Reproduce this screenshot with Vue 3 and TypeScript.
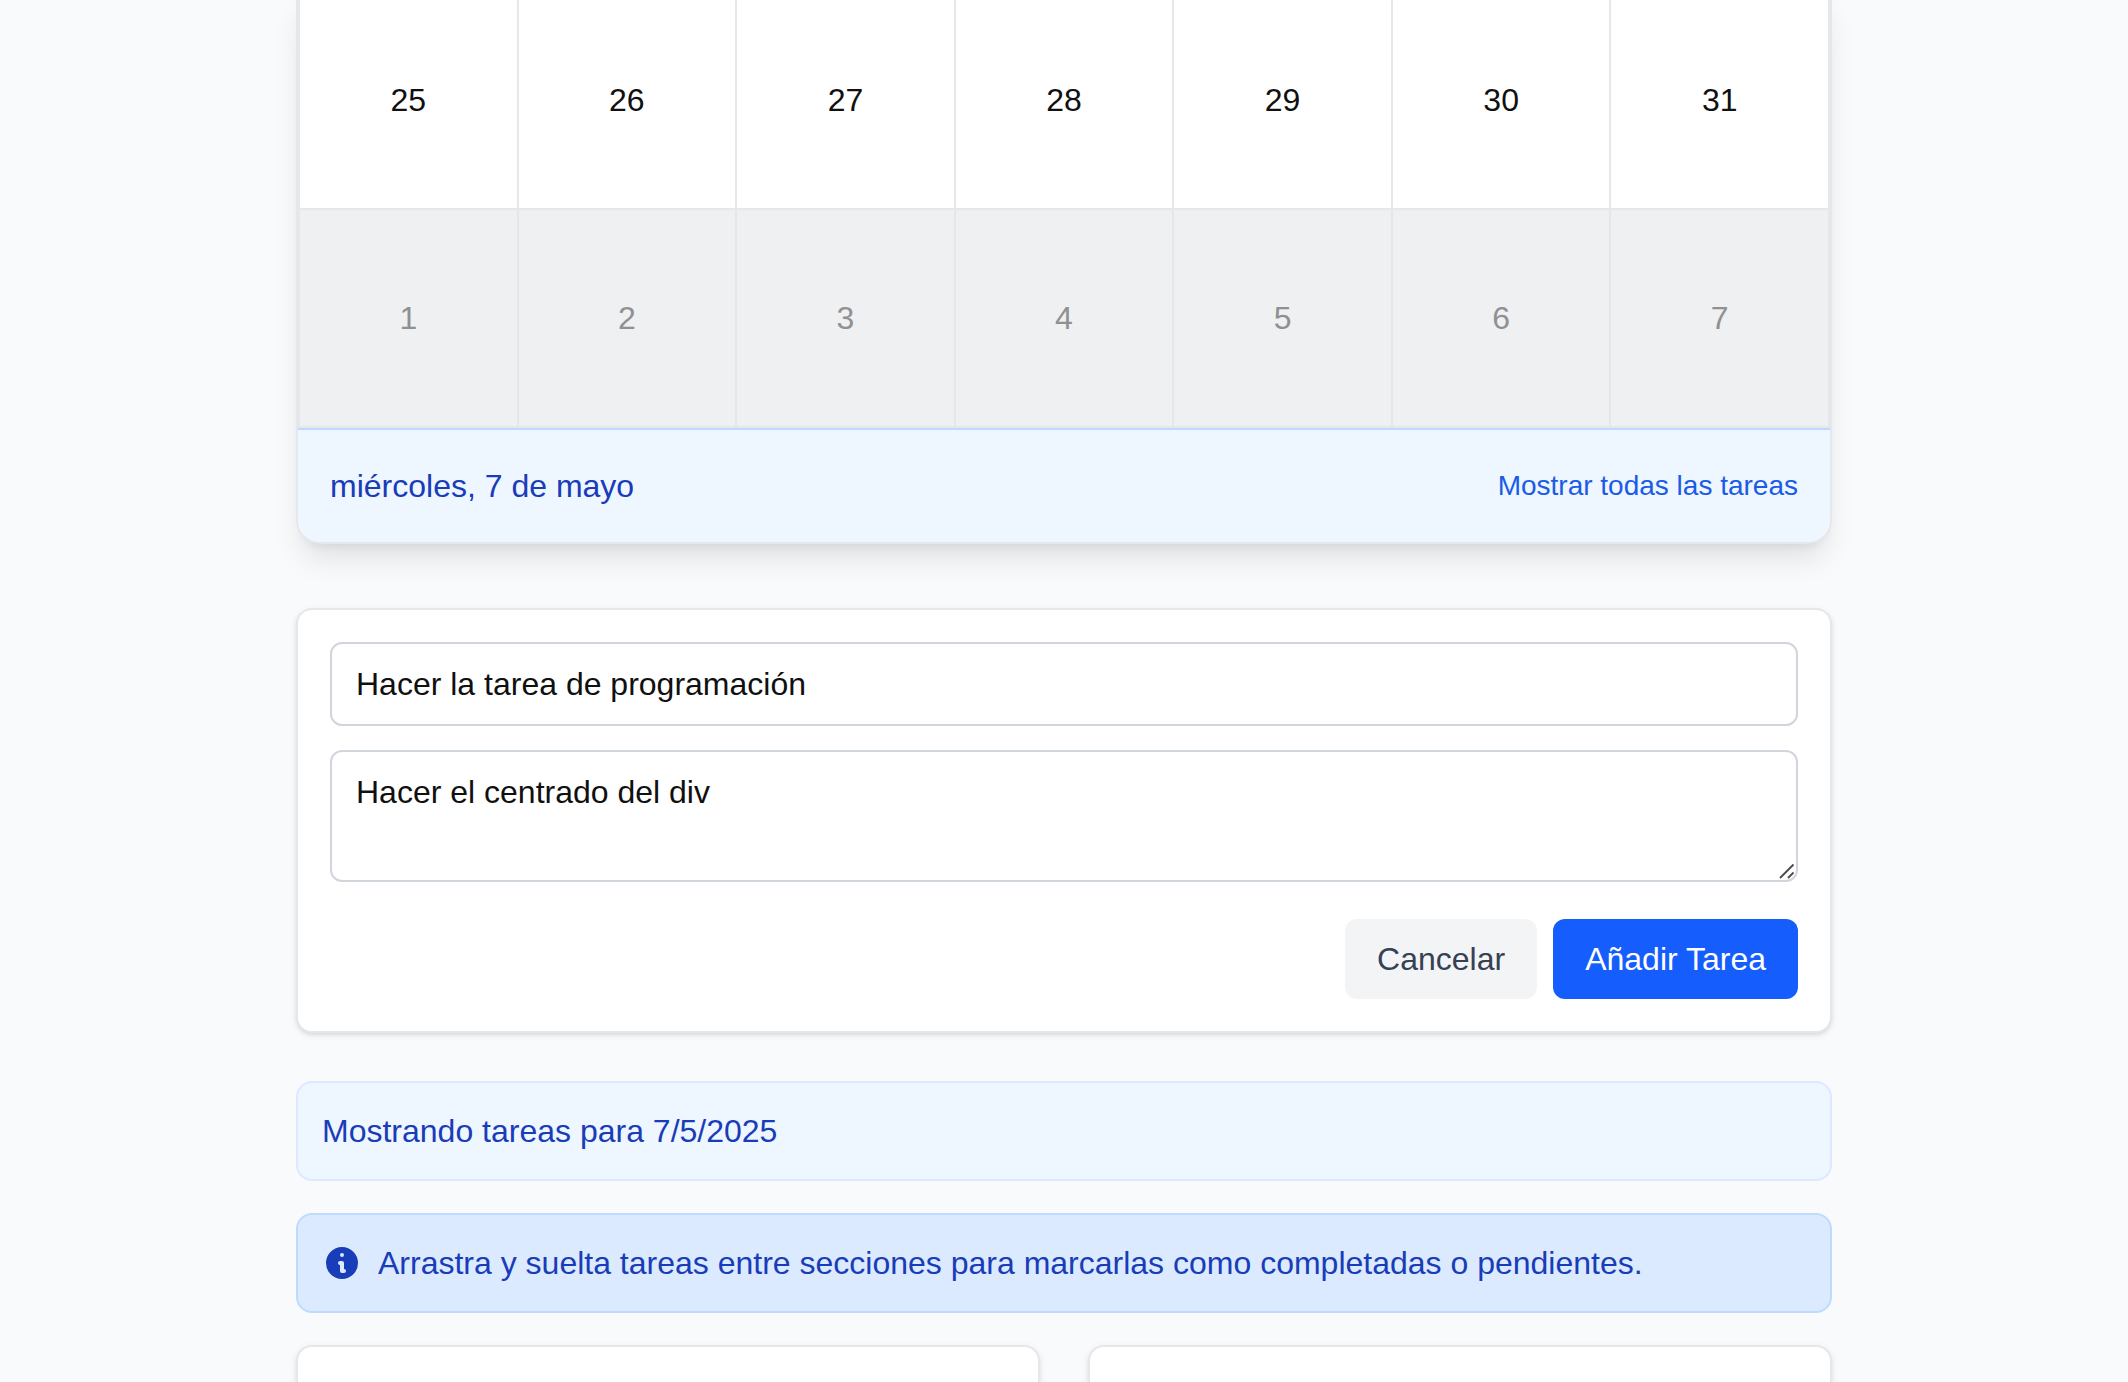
<script setup lang="ts">
import { ref } from 'vue'

interface Day {
  day: number
  outside: boolean
}

const days: Day[] = [
  ...[25, 26, 27, 28, 29, 30, 31].map((day) => ({ day, outside: false })),
  ...[1, 2, 3, 4, 5, 6, 7].map((day) => ({ day, outside: true })),
]

const title = ref('Hacer la tarea de programación')
const description = ref('Hacer el centrado del div')
</script>

<template>
  <main class="page">
    <div class="container">
      <section class="calendar">
        <div class="grid">
          <div v-for="(d, i) in days" :key="i" class="cell" :class="{ outside: d.outside }">
            <span>{{ d.day }}</span>
          </div>
        </div>
        <footer class="selected">
          <span>miércoles, 7 de mayo</span>
          <button type="button" class="link">Mostrar todas las tareas</button>
        </footer>
      </section>

      <form class="card form" @submit.prevent>
        <input v-model="title" class="field" type="text" />
        <div class="area">
          <textarea v-model="description" class="field" rows="2"></textarea>
          <svg class="grip" viewBox="0 0 16 16" width="16" height="16" aria-hidden="true">
            <path d="M1 15 14.5 1.5M9 15l5.5-5.5" fill="none" stroke="#4d4d4d" stroke-width="1.9" />
          </svg>
        </div>
        <div class="actions">
          <button type="button" class="btn cancel">Cancelar</button>
          <button type="submit" class="btn add">Añadir Tarea</button>
        </div>
      </form>

      <div class="notice filter">Mostrando tareas para 7/5/2025</div>

      <div class="notice info">
        <svg viewBox="0 0 20 20" width="40" height="40" fill="currentColor" aria-hidden="true">
          <path fill-rule="evenodd" clip-rule="evenodd" d="M18 10a8 8 0 11-16 0 8 8 0 0116 0zm-7-4a1 1 0 11-2 0 1 1 0 012 0zM9 9a1 1 0 000 2v3a1 1 0 001 1h1a1 1 0 100-2v-3a1 1 0 00-1-1H9z" />
        </svg>
        <span>Arrastra y suelta tareas entre secciones para marcarlas como completadas o pendientes.</span>
      </div>

      <div class="columns">
        <section class="card"></section>
        <section class="card"></section>
      </div>
    </div>
  </main>
</template>

<style>
body {
  margin: 0;
  overflow: hidden;
}
</style>

<style scoped>
* {
  box-sizing: border-box;
}
.page {
  height: 1382px;
  overflow: hidden;
  background: #f9fafc;
  color: #101010;
  font: 32px/48px 'Liberation Sans', Arial, sans-serif;
}
.container {
  width: 1536px;
  margin: 0 auto;
  display: flex;
  flex-direction: column;
}
.calendar {
  margin-top: -10px;
  border: 2px solid #e5e7eb;
  border-top: 0;
  border-radius: 0 0 24px 24px;
  overflow: hidden;
  background: #fff;
  box-shadow: 0 20px 30px -6px rgba(0, 0, 0, 0.1), 0 8px 12px -8px rgba(0, 0, 0, 0.1);
}
.grid {
  display: grid;
  grid-template-columns: repeat(7, 1fr);
  grid-auto-rows: 218px;
  border-right: 2px solid #e5e7eb;
  border-bottom: 2px solid #e5e7eb;
}
.cell {
  display: flex;
  align-items: center;
  justify-content: center;
  border-left: 2px solid #e5e7eb;
  border-top: 2px solid #e5e7eb;
}
.cell.outside {
  background: #eff0f2;
  color: #8f9092;
}
.selected {
  height: 114px;
  padding: 0 32px;
  display: flex;
  align-items: center;
  justify-content: space-between;
  border-top: 2px solid #bedbff;
  background: #eef6ff;
  color: #193cb8;
}
.link {
  border: 0;
  padding: 0;
  background: none;
  color: #1b5be6;
  font: inherit;
  font-size: 28px;
  line-height: 40px;
}
.card {
  border: 2px solid #e5e7eb;
  border-radius: 16px;
  background: #fff;
  box-shadow: 0 2px 6px rgba(0, 0, 0, 0.1), 0 2px 4px -2px rgba(0, 0, 0, 0.1);
}
.form {
  margin-top: 64px;
  padding: 32px;
}
.field {
  display: block;
  width: 100%;
  padding: 16px 24px;
  border: 2px solid #d1d5dc;
  border-radius: 12px;
  outline: 0;
  background: #fff;
  color: inherit;
  font: inherit;
  resize: none;
}
input.field {
  height: 84px;
}
.area {
  position: relative;
  margin-top: 24px;
}
textarea.field {
  height: 132px;
  overflow: hidden;
}
.grip {
  position: absolute;
  right: 3px;
  bottom: 3px;
}
.actions {
  display: flex;
  justify-content: flex-end;
  gap: 16px;
  margin-top: 37px;
}
.btn {
  height: 80px;
  padding: 0 32px;
  border: 0;
  border-radius: 12px;
  font: inherit;
}
.cancel {
  background: #f3f4f6;
  color: #364153;
}
.add {
  background: #155dfc;
  color: #fff;
}
.notice {
  height: 100px;
  padding: 24px;
  border: 2px solid;
  border-radius: 16px;
  color: #193cb8;
}
.filter {
  margin-top: 48px;
  border-color: #dbeafe;
  background: #eef6ff;
}
.info {
  display: flex;
  align-items: center;
  gap: 16px;
  margin-top: 32px;
  border-color: #bedbff;
  background: #dbeafe;
}
.columns {
  display: grid;
  grid-template-columns: 1fr 1fr;
  gap: 48px;
  margin-top: 32px;
}
.columns .card {
  height: 240px;
}
</style>
